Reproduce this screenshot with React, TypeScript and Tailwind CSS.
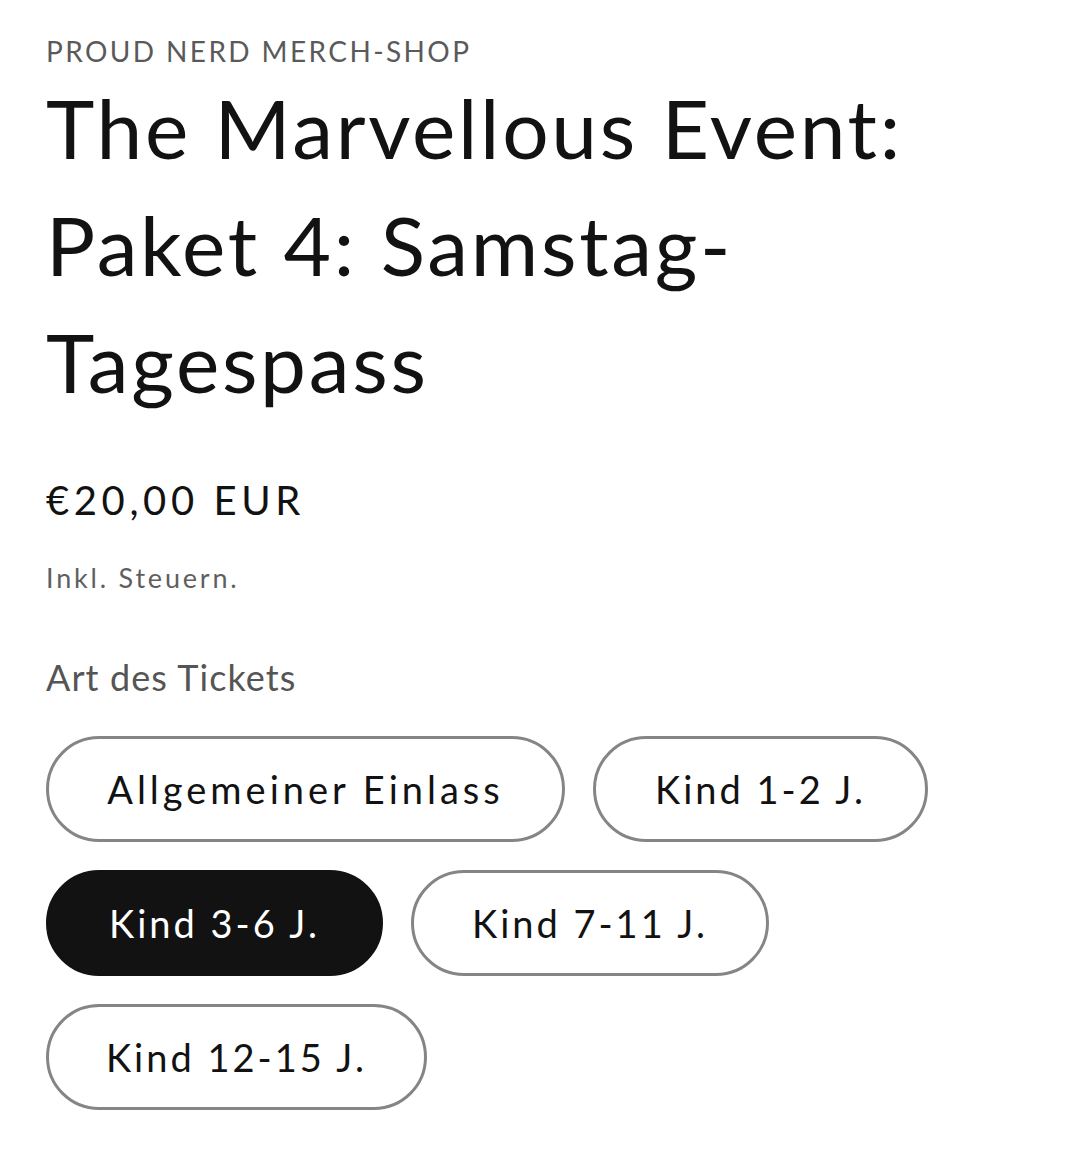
import React, { useState } from "react";

const options = [
  { label: "Allgemeiner Einlass", width: "w-[519px]", tracking: "tracking-[4px]" },
  { label: "Kind 1-2 J.", width: "w-[335px]", tracking: "tracking-[3px]" },
  { label: "Kind 3-6 J.", width: "w-[337px]", tracking: "tracking-[3px]" },
  { label: "Kind 7-11 J.", width: "w-[358px]", tracking: "tracking-[3px]" },
  { label: "Kind 12-15 J.", width: "w-[381px]", tracking: "tracking-[3px]" },
];

export default function App() {
  const [selected, setSelected] = useState("Kind 3-6 J.");

  return (
    <div className="min-h-[1162px] w-[1080px] bg-white px-[46px] text-[#121212] font-['Lato',sans-serif]">
      {/* Vendor caption */}
      <p className="pt-[31px] text-[28px] leading-[40px] tracking-[2.4px] text-[#5a5a5a] uppercase">
        Proud Nerd Merch-Shop
      </p>

      {/* Product title */}
      <h1 className="mt-[-2px] text-[82px] leading-[117px] tracking-[2.7px] font-normal">
        <span className="block">The Marvellous Event:</span>
        <span className="block">Paket 4: Samstag-</span>
        <span className="block">Tagespass</span>
      </h1>

      {/* Price */}
      <div className="mt-[56px] text-[40px] leading-[48px] tracking-[4.6px]">€20,00 EUR</div>
      <p className="mt-[38px] text-[27px] leading-[32px] tracking-[2.8px] text-[#5f5f5f]">Inkl. Steuern.</p>

      {/* Variant picker */}
      <fieldset className="mt-[61px]">
        <legend className="text-[36px] leading-[44px] tracking-[1.1px] text-[#555]">Art des Tickets</legend>
        <div className="mt-[37px] flex flex-wrap gap-[28px]">
          {options.map((opt) => {
            const active = opt.label === selected;
            return (
              <button
                key={opt.label}
                type="button"
                onClick={() => setSelected(opt.label)}
                className={`${opt.width} ${opt.tracking} h-[106px] rounded-full border-[3px] text-[38px] ${
                  active ? "border-[#121212] bg-[#121212] text-white" : "border-[#858585] bg-white text-[#121212]"
                }`}
              >
                {opt.label}
              </button>
            );
          })}
        </div>
      </fieldset>
    </div>
  );
}
